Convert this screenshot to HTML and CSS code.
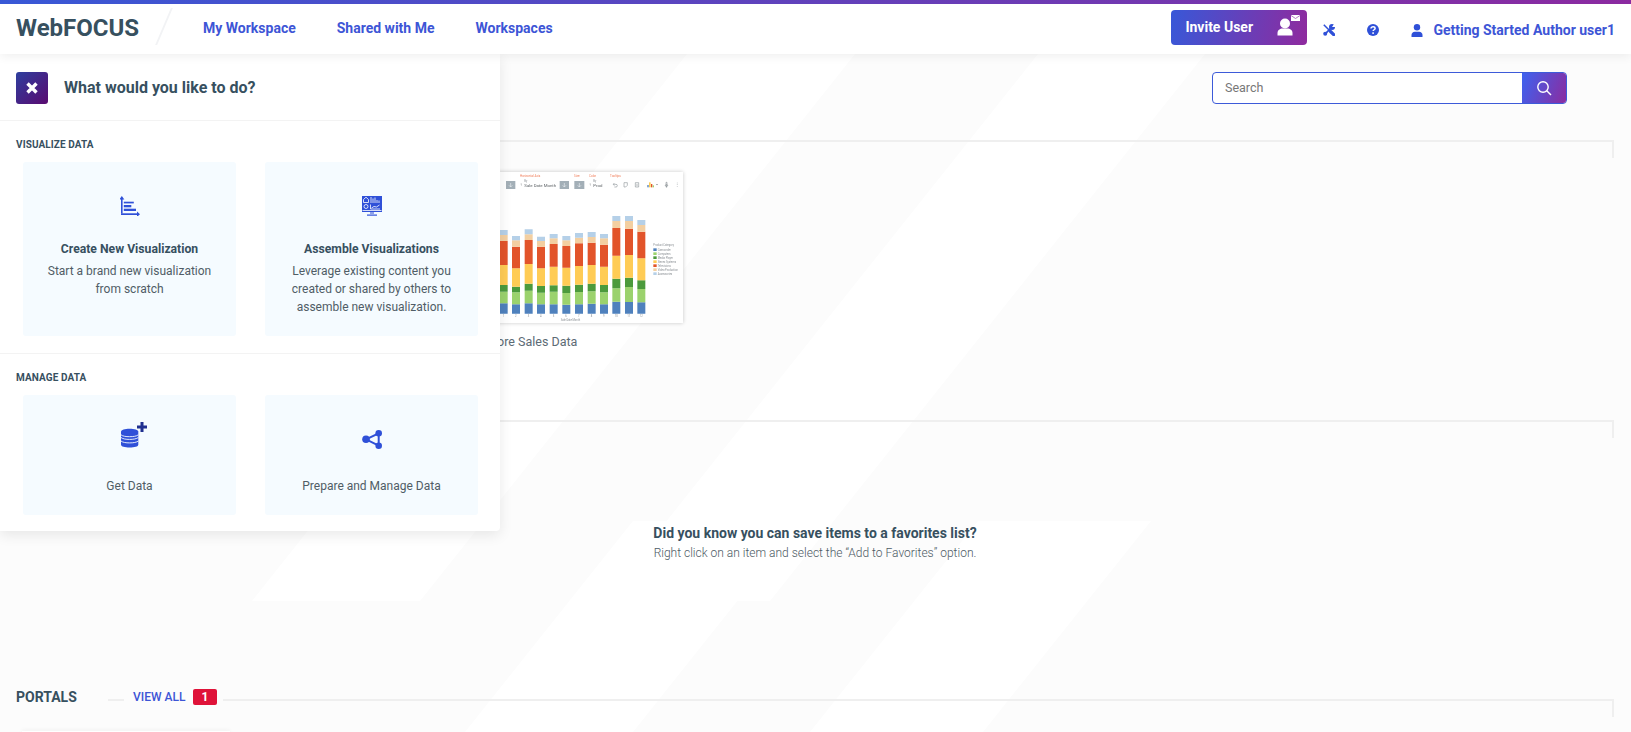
FILE: index.html
```html
<!DOCTYPE html>
<html lang="en">
<head>
<meta charset="utf-8">
<title>WebFOCUS</title>
<link rel="stylesheet" href="styles.css">
</head>
<body>
<svg class="backdrop" width="1631" height="732" viewBox="0 0 1631 732" aria-hidden="true">
  <polygon class="stripe" points="687,54 855,54 420,601 252,601"/>
  <polygon class="stripe" points="1038,54 1205,54 770,601 603,601"/>
  <polygon class="stripe" points="978,521 1151,521 983,732 810,732"/>
  <polygon class="stripe" points="633,521 801,521 633,732 465,732"/>
</svg>

<header class="topbar">
  <div class="logo">WebFOCUS</div>
  <div class="logo-slash"></div>
  <nav class="nav">
    <a class="nav-link">My Workspace</a>
    <a class="nav-link">Shared with Me</a>
    <a class="nav-link">Workspaces</a>
  </nav>
  <div class="tools">
    <button class="invite">
      <span class="invite-label">Invite User</span>
      <svg class="invite-icon" width="24" height="22" viewBox="0 0 24 22">
        <circle cx="9" cy="9.500" r="5" fill="#fff"/>
        <path d="M1.500 21.500v-2.500c0-3 2.500-4.500 5-4.500h5c2.500 0 5 1.500 5 4.500v2.500z" fill="#fff"/>
        <rect x="15" y="1" width="9" height="6" fill="#fff"/>
        <path d="M15 1.500l4.500 3 4.500-3" fill="none" stroke="#a45ab8" stroke-width=".8"/>
      </svg>
    </button>
    <svg class="tool-icon" width="12" height="12" viewBox="0 0 12 12">
      <path d="M.8.8l6.500 6.500" stroke="#2f50d8" stroke-width="1.500"/>
      <path d="M7.500 7.500l3.200 3.200" stroke="#2f50d8" stroke-width="3.200" stroke-linecap="round"/>
      <path d="M2.200 9.800l6-6" stroke="#2f50d8" stroke-width="1.800"/>
      <circle cx="2.200" cy="9.800" r="2" fill="#2f50d8"/>
      <circle cx="9" cy="3" r="3" fill="#2f50d8"/>
      <path d="M9 3l2-3h1v3z" fill="#fff"/>
    </svg>
    <svg class="tool-icon help" width="12" height="12" viewBox="0 0 12 12">
      <circle cx="6" cy="6" r="6" fill="#2f50d8"/>
      <path d="M4 4.600c0-1.200 1-1.900 2.100-1.900s2 .7 2 1.700c0 1.300-2 1.400-2 2.700" fill="none" stroke="#fff" stroke-width="1.500"/>
      <rect x="5.300" y="8.300" width="1.600" height="1.600" fill="#fff"/>
    </svg>
    <svg class="tool-icon user" width="12" height="13" viewBox="0 0 12 13">
      <circle cx="6" cy="3.300" r="3.200" fill="#2f50d8"/>
      <path d="M.5 13v-2c0-2 1.500-3.300 3.300-3.300h4.400c1.800 0 3.300 1.300 3.300 3.300v2z" fill="#2f50d8"/>
    </svg>
    <span class="user-name">Getting Started Author user1</span>
  </div>
</header>

<main class="page">
  <div class="search-row">
    <div class="search">
      <span class="search-input">Search</span>
      <span class="search-btn">
        <svg width="16" height="16" viewBox="0 0 16 16">
          <circle cx="7" cy="7" r="5.200" fill="none" stroke="#fff" stroke-width="1.400"/>
          <path d="M10.800 10.800l4.200 4.200" stroke="#fff" stroke-width="1.400"/>
        </svg>
      </span>
    </div>
  </div>

  <section class="block block-recent">
    <div class="block-head"><div class="rule"></div></div>
    <figure class="thumb">
      <svg class="thumb-img" width="303" height="151" viewBox="-300 21 909 453">
        <g class="tb">
          <rect x="78" y="48" width="28" height="24"/>
          <rect x="239" y="48" width="28" height="24"/>
          <rect x="283" y="48" width="30" height="24"/>
        </g>
        <path d="M92 54v12M87 61l5 5 5-5M253 54v12M248 61l5 5 5-5M298 54v12M293 61l5 5 5-5" fill="none" stroke="#e8edf0" stroke-width="2"/>
        <g class="tl">
          <text x="120" y="36">Horizontal Axis</text>
          <text x="282" y="36">Size</text>
          <text x="327" y="36">Color</text>
          <text x="390" y="36">Tooltips</text>
        </g>
        <g class="tt">
          <text x="133" y="50">By</text>
          <text x="340" y="50">By</text>
          <text x="120" y="64" class="big">↑</text>
          <text x="327" y="64" class="big">↑</text>
          <text x="133" y="67" class="big">Sale Date Month</text>
          <text x="340" y="67" class="big">Prod</text>
          <text x="242" y="469">Sale Date Month</text>
          <text x="68" y="455">1</text><text x="105" y="455">2</text><text x="143" y="455">3</text><text x="180" y="455">4</text><text x="218" y="455">5</text><text x="256" y="455">6</text><text x="294" y="455">7</text><text x="332" y="455">8</text><text x="369" y="455">9</text><text x="404" y="455">10</text><text x="442" y="455">11</text><text x="479" y="455">12</text>
          <text x="520" y="244">Product Category</text>
          <text x="533" y="257">Camcorder</text>
          <text x="533" y="269">Computers</text>
          <text x="533" y="281">Media Player</text>
          <text x="533" y="293">Stereo Systems</text>
          <text x="533" y="305">Televisions</text>
          <text x="533" y="317">Video Production</text>
          <text x="533" y="329">Accessories</text>
        </g>
        <g class="tbar-icons">
          <path d="M400 58h8a4 4 0 0 1 0 8h-5M403 54l-3 4 3 4"/>
          <path d="M432 53h10v8l-5 5h-5z"/>
          <path d="M466 53h10v13h-10zM469 58h4M469 62h4"/>
          <path d="M558 52h3v8h-3zM556 60h7v3h-7zM559 63h1v4h-1z"/>
          <path d="M592 53v2M592 58v2M592 63v2"/>
        </g>
        <rect class="c-blue" x="502" y="60" width="4" height="7"/>
        <rect class="c-yellow" x="507" y="52" width="5" height="15"/>
        <rect class="c-red" x="513" y="57" width="4" height="10"/>
        <rect class="c-lgreen" x="518" y="61" width="4" height="6"/>
        <path class="tri" d="M528 57h6l-3 4z"/>
        <path class="c-blue" d="M59 415h24V446h-24zM96 418h24V446h-24zM134 415h24V446h-24zM171 418h24V446h-24zM209 418h24V446h-24zM247 419h24V446h-24zM285 418h24V446h-24zM323 416h24V446h-24zM360 418h24V446h-24zM397 410h24V446h-24zM435 411h24V446h-24zM472 412h24V446h-24z"/>
        <path class="c-lgreen" d="M59 380h24V415h-24zM96 382h24V418h-24zM134 377h24V415h-24zM171 383h24V418h-24zM209 380h24V418h-24zM247 384h24V419h-24zM285 381h24V418h-24zM323 379h24V416h-24zM360 382h24V418h-24zM397 370h24V410h-24zM435 366h24V411h-24zM472 372h24V412h-24z"/>
        <path class="c-green" d="M59 360h24V380h-24zM96 365h24V382h-24zM134 356h24V377h-24zM171 363h24V383h-24zM209 361h24V380h-24zM247 362h24V384h-24zM285 359h24V381h-24zM323 356h24V379h-24zM360 360h24V382h-24zM397 341h24V370h-24zM435 338h24V366h-24zM472 346h24V372h-24z"/>
        <path class="c-yellow" d="M59 300h24V360h-24zM96 310h24V365h-24zM134 297h24V356h-24zM171 310h24V363h-24zM209 305h24V361h-24zM247 308h24V362h-24zM285 303h24V359h-24zM323 300h24V356h-24zM360 305h24V360h-24zM397 272h24V341h-24zM435 270h24V338h-24zM472 280h24V346h-24z"/>
        <path class="c-red" d="M59 228h24V300h-24zM96 245h24V310h-24zM134 225h24V297h-24zM171 245h24V310h-24zM209 237h24V305h-24zM247 243h24V308h-24zM285 235h24V303h-24zM323 233h24V300h-24zM360 239h24V305h-24zM397 189h24V272h-24zM435 191h24V270h-24zM472 200h24V280h-24z"/>
        <path class="c-peach" d="M59 210h24V228h-24zM96 226h24V245h-24zM134 208h24V225h-24zM171 228h24V245h-24zM209 220h24V237h-24zM247 226h24V243h-24zM285 218h24V235h-24zM323 216h24V233h-24zM360 220h24V239h-24zM397 168h24V189h-24zM435 168h24V191h-24zM472 180h24V200h-24z"/>
        <path class="c-lblue" d="M59 195h24V210h-24zM96 213h24V226h-24zM134 193h24V208h-24zM171 215h24V228h-24zM209 207h24V220h-24zM247 213h24V226h-24zM285 204h24V218h-24zM323 201h24V216h-24zM360 207h24V220h-24zM397 153h24V168h-24zM435 153h24V168h-24zM472 165h24V180h-24z"/>
        <rect class="c-blue" x="520" y="250" width="10" height="8"/>
        <rect class="c-lgreen" x="520" y="262" width="10" height="8"/>
        <rect class="c-green" x="520" y="274" width="10" height="8"/>
        <rect class="c-yellow" x="520" y="286" width="10" height="8"/>
        <rect class="c-red" x="520" y="298" width="10" height="8"/>
        <rect class="c-peach" x="520" y="310" width="10" height="8"/>
        <rect class="c-lblue" x="520" y="322" width="10" height="8"/>
      </svg>
      <figcaption class="thumb-caption">Store Sales Data</figcaption>
    </figure>
  </section>

  <section class="block block-favorites">
    <div class="block-head"><div class="rule"></div></div>
    <h2 class="hint-title">Did you know you can save items to a favorites list?</h2>
    <p class="hint-text">Right click on an item and select the “Add to Favorites” option.</p>
  </section>

  <section class="block block-portals">
    <div class="block-head">
      <span class="block-title">PORTALS</span>
      <span class="rule-short"></span>
      <a class="view-all">VIEW ALL</a>
      <span class="badge">1</span>
      <div class="rule"></div>
    </div>
    <div class="portal-card"></div>
  </section>
</main>

<aside class="panel">
  <div class="panel-head">
    <button class="close" aria-label="Close">
      <svg width="12" height="12" viewBox="0 0 12 12"><path d="M1.500 1.500l9 9M10.500 1.500l-9 9" stroke="#fff" stroke-width="3.400"/></svg>
    </button>
    <h1 class="panel-title">What would you like to do?</h1>
  </div>

  <div class="panel-group group-visualize">
    <h3 class="group-title">VISUALIZE DATA</h3>
    <div class="group-cards">
      <div class="action">
        <svg class="action-icon" width="20" height="20" viewBox="0 0 20 20">
          <g fill="#2f50d8">
            <path d="M1 3h1.600v14.500H1z"/>
            <path d="M-.8 3.500L1.800 0l2.600 3.500z"/>
            <path d="M1 17.300h17v1.700H1z"/>
            <path d="M17 15.500l3 2.700-3 2.700z"/>
            <rect x="3.800" y="5.700" width="10" height="1.700"/>
            <rect x="3.800" y="9" width="7.500" height="2.300"/>
            <rect x="3.800" y="12.700" width="12.200" height="2.300"/>
          </g>
        </svg>
        <div class="action-title">Create New Visualization</div>
        <p class="action-text">Start a brand new visualization<br>from scratch</p>
      </div>
      <div class="action">
        <svg class="action-icon" width="20" height="20" viewBox="0 0 20 20">
          <rect x="0" y="0" width="20" height="16" fill="#2f50d8"/>
          <path d="M5 18.500h10v1.200H5z" fill="#2f50d8"/>
          <path d="M8 16h4v2.500H8z" fill="#8fa2ea"/>
          <g fill="none" stroke="#fff" stroke-width=".8">
            <path d="M1.500 6.500V3.500L4 1.200l2.500 2.300v3z"/>
            <circle cx="4" cy="10.500" r="2"/>
            <path d="M9 1v6M11 2.500v4.500M13 1.500v5.500M15 4v3M17 4.500v2.500"/>
            <path d="M8.500 8.500V13H18M9.500 12l2.500-1.500 2.500.5 3-2"/>
            <path d="M.5 14.500h19"/>
          </g>
        </svg>
        <div class="action-title">Assemble Visualizations</div>
        <p class="action-text">Leverage existing content you<br>created or shared by others to<br>assemble new visualization.</p>
      </div>
    </div>
  </div>

  <div class="panel-group group-manage">
    <h3 class="group-title">MANAGE DATA</h3>
    <div class="group-cards">
      <div class="action action-short">
        <svg class="action-icon db" width="28" height="28" viewBox="0 0 28 28">
          <path d="M2 9.500C2 7.800 5.900 6.700 10.600 6.700s8.700 1.100 8.700 2.800v13.200c0 1.700-3.900 2.800-8.700 2.800S2 24.400 2 22.700z" fill="#2f50d8"/>
          <g fill="none" stroke="#f5fbff" stroke-width=".9">
            <path d="M2 12.800c1.500 1.400 5 1.900 8.600 1.900s7.100-.5 8.700-1.900"/>
            <path d="M2 15.500c1.500 1.400 5 1.900 8.600 1.900s7.100-.5 8.700-1.900"/>
            <path d="M2 19c1.500 1.400 5 1.900 8.600 1.900s7.100-.5 8.700-1.900"/>
          </g>
          <path d="M23 0v10M18 5h10" stroke="#1f2f8f" stroke-width="3"/>
        </svg>
        <div class="action-text action-single">Get Data</div>
      </div>
      <div class="action action-short">
        <svg class="action-icon" width="20" height="20" viewBox="0 0 20 20">
          <path d="M4 10.300L16.700 4.300v12.400z" fill="none" stroke="#2f50d8" stroke-width="2"/>
          <circle cx="4" cy="10.300" r="3.800" fill="#2f50d8"/>
          <circle cx="16.700" cy="4.300" r="3.300" fill="#2f50d8"/>
          <circle cx="16.700" cy="16.700" r="3.300" fill="#2f50d8"/>
        </svg>
        <div class="action-text action-single">Prepare and Manage Data</div>
      </div>
    </div>
  </div>
</aside>
</body>
</html>
```

FILE: styles.css
```css
* { box-sizing: border-box; }

html, body {
  margin: 0;
  height: 732px;
  overflow: hidden;
}

body {
  position: relative;
  background: #fcfcfc;
  font-family: Roboto, "Liberation Sans", sans-serif;
  color: #37505f;
}

.backdrop {
  position: absolute;
  left: 0;
  top: 0;
}

.stripe { fill: #fff; }

/* Top bar */
.topbar {
  position: relative;
  z-index: 3;
  display: flex;
  align-items: center;
  height: 54px;
  padding: 4px 16px 0 16px;
  background: #fff;
  box-shadow: 0 2px 10px rgba(0, 0, 0, .07);
}

.topbar::before {
  content: "";
  position: absolute;
  left: 0;
  right: 0;
  top: 0;
  height: 4px;
  background: linear-gradient(90deg, #3858d6, #8b2aa0);
}

.logo {
  width: 123px;
  margin-bottom: 3px;
  font-size: 24px;
  font-weight: 700;
  white-space: nowrap;
  color: #37505f;
}

.logo-slash {
  width: 2px;
  height: 37px;
  margin: 0 0 5px 24px;
  background: #f2f3f5;
  transform: skewX(-23deg);
}

.nav {
  display: flex;
  gap: 41px;
  margin: 0 0 3px 38px;
}

.nav-link {
  font-size: 14px;
  font-weight: 700;
  color: #3d55d6;
}

.tools {
  display: flex;
  align-items: center;
  margin-left: auto;
}

.invite {
  display: flex;
  align-items: center;
  justify-content: space-between;
  width: 136px;
  height: 35px;
  margin: 0 0 3px;
  padding: 0 7px 0 14px;
  border: 0;
  border-radius: 4px;
  background: linear-gradient(100deg, #3858d8, #8f2a9e);
  color: #fff;
  font: 700 14px Roboto, sans-serif;
}

.invite-label { margin-bottom: 2px; }
.invite-icon { margin-bottom: 5px; }

.tool-icon { margin: 2px 0 0 16px; }
.tool-icon.help { margin-left: 32px; }
.tool-icon.user { margin-left: 32px; }

.user-name {
  margin: 2px 0 0 10px;
  font-size: 14px;
  font-weight: 700;
  color: #3d55d6;
  white-space: nowrap;
}

/* Main content */
.page {
  position: relative;
  z-index: 1;
  padding: 0 17px 0 16px;
}

.search-row {
  display: flex;
  justify-content: flex-end;
  height: 86px;
  padding: 18px 47px 0 0;
}

.search {
  display: flex;
  width: 355px;
  height: 32px;
  border: 1px solid #3d5bd9;
  border-radius: 4px;
  overflow: hidden;
  background: #fff;
}

.search-input {
  flex: 1;
  padding-left: 12px;
  font-size: 12.500px;
  line-height: 30px;
  color: #777;
}

.search-btn {
  display: flex;
  align-items: center;
  justify-content: center;
  width: 44px;
  background: linear-gradient(110deg, #3d62f0, #8b2ca0);
}

.block-recent { height: 280px; }
.block-favorites { height: 279px; text-align: center; }
.block-portals { height: 33px; }

.block-head {
  display: flex;
  align-items: flex-start;
  height: 18px;
}

.rule {
  flex: 1;
  height: 18px;
  border-top: 2px solid #efefef;
  border-right: 2px solid #efefef;
}

.thumb {
  width: 303px;
  margin: 14px 0 0 364px;
}

.thumb-img {
  display: block;
  background: #fff;
  box-shadow: 0 0 4px rgba(0, 0, 0, .22);
  filter: blur(.4px);
}

.thumb-caption {
  margin-top: 10px;
  font-size: 12.500px;
  line-height: 18px;
  text-align: center;
  color: #5c6b75;
}

.tb rect { fill: #a3afb7; }
.tl text { font-size: 9px; fill: #f0805e; font-family: Roboto, sans-serif; }
.tt text { font-size: 8px; fill: #8a8f94; font-family: Roboto, sans-serif; }
.tt .big { font-size: 13px; fill: #5f6468; }
.tbar-icons path { fill: none; stroke: #7d848a; stroke-width: 1.600; }
.tri { fill: #7d848a; }

.c-blue { fill: #4f81bd; }
.c-lgreen { fill: #9bd26d; }
.c-green { fill: #4c9a3c; }
.c-yellow { fill: #ffcc55; }
.c-red { fill: #e2542a; }
.c-peach { fill: #f3cfa1; }
.c-lblue { fill: #b5d0e8; }

.hint-title {
  margin: 85px 0 0;
  font-size: 14px;
  font-weight: 700;
  line-height: 20px;
  color: #37505f;
}

.hint-text {
  margin: 1px 0 0;
  font-size: 12px;
  font-weight: 300;
  line-height: 18px;
  color: #4c5a64;
}

.block-title {
  width: 92px;
  margin-top: -12px;
  font-size: 14px;
  font-weight: 700;
  line-height: 20px;
  color: #37505f;
}

.rule-short {
  width: 16px;
  height: 2px;
  background: #efefef;
}

.view-all {
  margin: -12px 0 0 9px;
  width: 60px;
  font-size: 12px;
  font-weight: 500;
  line-height: 20px;
  color: #3d55d6;
}

.badge {
  width: 24px;
  height: 16px;
  margin: -10px 6px 0 0;
  border-radius: 2px;
  background: #df1339;
  color: #fff;
  font-size: 12px;
  font-weight: 700;
  line-height: 16px;
  text-align: center;
}

.portal-card {
  width: 208px;
  height: 1px;
  margin: 14px 0 0 6px;
  background: #fff;
  box-shadow: 0 0 4px rgba(0, 0, 0, .16);
}

/* Overlay panel */
.panel {
  position: absolute;
  z-index: 2;
  left: 0;
  top: 54px;
  width: 500px;
  background: #fff;
  border-radius: 0 0 4px 0;
  box-shadow: 0 4px 14px rgba(0, 0, 0, .09);
}

.panel-head {
  display: flex;
  align-items: flex-start;
  gap: 16px;
  height: 67px;
  padding: 18px 16px 0;
  border-bottom: 1px solid #f3f3f3;
}

.close {
  display: flex;
  align-items: center;
  justify-content: center;
  width: 32px;
  height: 32px;
  padding: 0;
  border: 0;
  border-radius: 3px;
  background: linear-gradient(135deg, #2e3f9e, #5a0a70);
}

.panel-title {
  margin: 0;
  font-size: 16px;
  font-weight: 700;
  line-height: 32px;
  color: #37505f;
}

.panel-group { padding: 16px 22px 17px 23px; }
.group-visualize { height: 233px; border-bottom: 1px solid #f3f3f3; }
.group-manage { padding-top: 16px; padding-bottom: 16px; }

.group-title {
  margin: 0 0 9px -7px;
  font-size: 10px;
  font-weight: 700;
  letter-spacing: .1px;
  line-height: 16px;
  color: #37505f;
}

.group-cards {
  display: grid;
  grid-template-columns: 213px 213px;
  gap: 29px;
}

.action {
  display: flex;
  flex-direction: column;
  align-items: center;
  height: 174px;
  padding-top: 34px;
  border-radius: 3px;
  background: #f5fbff;
  text-align: center;
}

.action-short { height: 120px; }

.action-icon { flex: none; }
.action-icon.db { margin: -7px 0 -1px 6px; }

.action-title {
  margin-top: 24px;
  font-size: 12.200px;
  font-weight: 700;
  line-height: 18px;
  color: #37505f;
}

.action-text {
  margin: 4px 0 0;
  font-size: 12px;
  line-height: 18px;
  color: #505d66;
}

.action-single { margin-top: 28px; }
```
